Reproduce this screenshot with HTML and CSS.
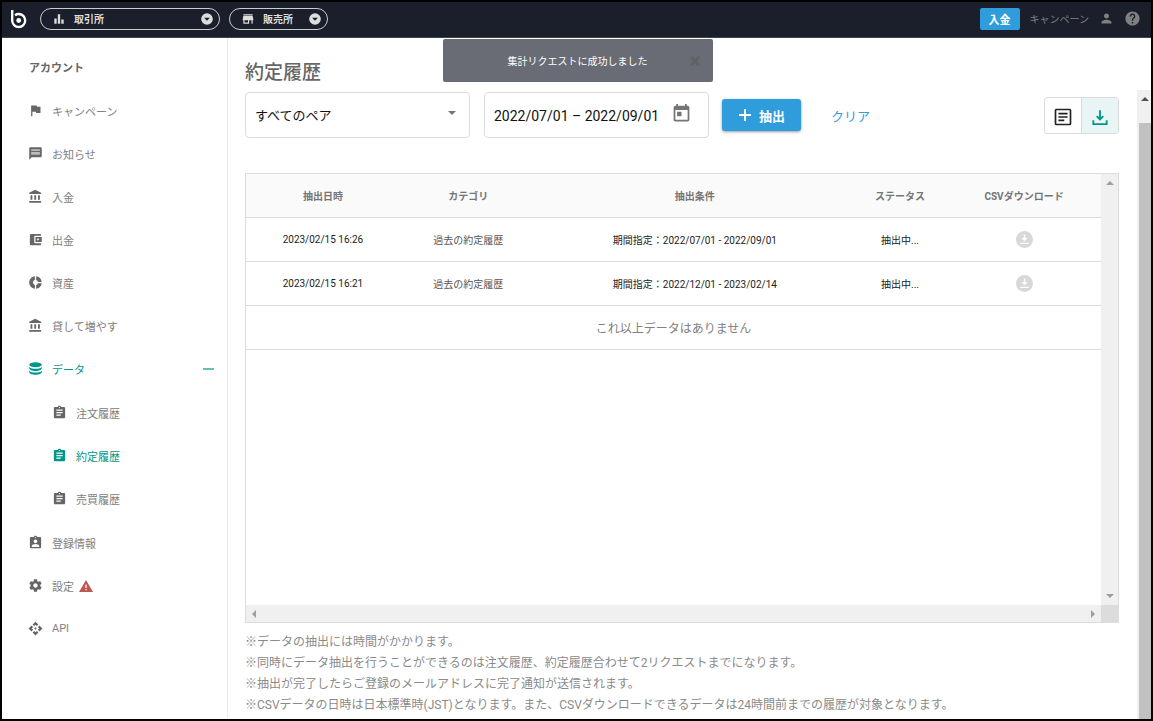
FILE: index.html
```html
<!DOCTYPE html>
<html lang="ja">
<head>
    <meta charset="UTF-8">
    <meta name="viewport" content="width=device-width, initial-scale=1.0">
    <title>約定履歴</title>
    <link rel="stylesheet" href="styles.css">
</head>
<body>
    <!-- Shared icons -->
    <svg class="sprite" aria-hidden="true">
        <symbol id="bank" viewBox="0 0 24 24"><path d="M4 10v7h3v-7H4zm6 0v7h3v-7h-3zM2 22h19v-3H2v3zm14-12v7h3v-7h-3zm-4.500-9L2 6v2h19V6l-9.500-5z"/></symbol>
        <symbol id="clip" viewBox="0 0 24 24"><path d="M19 3h-4.180C14.400 1.840 13.300 1 12 1s-2.400.840-2.820 2H5c-1.100 0-2 .9-2 2v14c0 1.100.9 2 2 2h14c1.100 0 2-.9 2-2V5c0-1.100-.9-2-2-2zm-7 0c.55 0 1 .45 1 1s-.45 1-1 1-1-.45-1-1 .45-1 1-1zm2 14H7v-2h7v2zm3-4H7v-2h10v2zm0-4H7V7h10v2z"/></symbol>
        <symbol id="pulldown" viewBox="0 0 24 24"><path fill-rule="evenodd" d="M12 2a10 10 0 1 0 0 20 10 10 0 0 0 0-20zM7 10h10l-5 5z"/></symbol>
        <symbol id="dl" viewBox="0 0 24 24"><circle cx="12" cy="12" r="12"/><path fill="#fff" d="M11 5h2v5h3.500L12 14.500 7.500 10H11zM6 16.500h12v2H6z"/></symbol>
    </svg>

    <div class="app">
        <header class="header">
            <a href="#" class="logo" aria-label="ホーム">
                <svg viewBox="0 0 18 20" fill="none" stroke="#fff" stroke-width="2.400"><path d="M2.200 1v10.500a6.500 6.500 0 1 0 6.500-6.500c-1.500 0-2.600.4-3.700 1.200"/><circle cx="8.700" cy="11.500" r="2.400" fill="#fff" stroke="none"/></svg>
            </a>
            <button class="market market-wide">
                <svg class="icon" viewBox="0 0 24 24"><path d="M4 11h4v9H4zM10 4h4v16h-4zM16 13h4v7h-4z"/></svg>
                <span>取引所</span>
                <svg class="icon pull"><use href="#pulldown"/></svg>
            </button>
            <button class="market">
                <svg class="icon" viewBox="0 0 24 24"><path d="M20 4H4v2h16V4zm1 10v-2l-1-5H4l-1 5v2h1v6h10v-6h4v6h2v-6h1zm-9 4H6v-4h6v4z"/></svg>
                <span>販売所</span>
                <svg class="icon pull"><use href="#pulldown"/></svg>
            </button>
            <div class="header-right">
                <button class="deposit">入金</button>
                <a href="#" class="header-link">キャンペーン</a>
                <a href="#" aria-label="ユーザー"><svg class="icon" viewBox="0 0 24 24"><path d="M12 12c2.210 0 4-1.790 4-4s-1.790-4-4-4-4 1.790-4 4 1.790 4 4 4zm0 2c-2.670 0-8 1.340-8 4v2h16v-2c0-2.660-5.330-4-8-4z"/></svg></a>
                <a href="#" aria-label="ヘルプ"><svg class="icon icon-help" viewBox="0 0 24 24"><path d="M12 2C6.480 2 2 6.480 2 12s4.480 10 10 10 10-4.480 10-10S17.520 2 12 2zm1 17h-2v-2h2v2zm2.070-7.750l-.9.920C13.450 12.900 13 13.500 13 15h-2v-.5c0-1.100.45-2.100 1.170-2.830l1.240-1.260c.37-.36.590-.86.590-1.410 0-1.100-.9-2-2-2s-2 .9-2 2H8c0-2.210 1.790-4 4-4s4 1.790 4 4c0 .88-.36 1.680-.93 2.250z"/></svg></a>
            </div>
        </header>

        <div class="toast" role="status">
            <span>集計リクエストに成功しました</span>
            <button class="toast-close" aria-label="閉じる"><svg viewBox="0 0 10 10"><path d="M1 1l8 8M9 1L1 9"/></svg></button>
        </div>

        <div class="body">
            <nav class="sidebar">
                <h2>アカウント</h2>
                <ul>
                    <li><a href="#"><svg class="icon" viewBox="0 0 24 24"><path d="M14.400 6L14 4H5v17h2v-7h5.600l.4 2h7V6z"/></svg><span>キャンペーン</span></a></li>
                    <li><a href="#"><svg class="icon" viewBox="0 0 24 24"><path d="M20 2H4c-1.100 0-2 .9-2 2v18l4-4h14c1.100 0 2-.9 2-2V4c0-1.100-.9-2-2-2z"/><path fill="#bbb" d="M5 5h14v3H5zM5 9.500h14V14H5z"/></svg><span>お知らせ</span></a></li>
                    <li><a href="#"><svg class="icon"><use href="#bank"/></svg><span>入金</span></a></li>
                    <li><a href="#"><svg class="icon" viewBox="0 0 24 24"><path d="M21 18v1c0 1.100-.9 2-2 2H5c-1.110 0-2-.9-2-2V5c0-1.100.89-2 2-2h14c1.100 0 2 .9 2 2v1h-9c-1.110 0-2 .9-2 2v8c0 1.100.89 2 2 2h9zm-9-2h10V8H12v8zm4-2.500c-.83 0-1.500-.67-1.500-1.500s.67-1.500 1.500-1.500 1.500.67 1.500 1.500-.67 1.500-1.500 1.500z"/></svg><span>出金</span></a></li>
                    <li><a href="#"><svg class="icon" viewBox="0 0 24 24"><path d="M11 2v6.100C9.300 8.500 8 10.100 8 12s1.300 3.500 3 3.900V22c-5.050-.5-9-4.760-9-10s3.950-9.500 9-10zM13 2v6.100c1.400.4 2.500 1.500 2.900 2.900H22c-.5-4.800-4.200-8.500-9-9zM13 15.900V22c4.800-.5 8.500-4.200 9-9h-6.100c-.4 1.400-1.500 2.500-2.900 2.900z"/></svg><span>資産</span></a></li>
                    <li><a href="#"><svg class="icon"><use href="#bank"/></svg><span>貸して増やす</span></a></li>
                    <li>
                        <a href="#" class="active">
                            <svg class="icon" viewBox="0 0 24 24"><ellipse cx="12" cy="6" rx="10" ry="4"/><path d="M2 9c2 3 6 3.500 10 3.500S20 12 22 9v2.500c0 2.500-4 4.500-10 4.500S2 14 2 11.500zM2 15c2 3 6 3.500 10 3.500s8-.5 10-3.500v2.500c0 2.500-4 4.500-10 4.500S2 20 2 17.500z"/></svg>
                            <span>データ</span>
                            <i class="collapse"></i>
                        </a>
                        <ul class="submenu">
                            <li><a href="#"><svg class="icon"><use href="#clip"/></svg><span>注文履歴</span></a></li>
                            <li><a href="#" class="active"><svg class="icon"><use href="#clip"/></svg><span>約定履歴</span></a></li>
                            <li><a href="#"><svg class="icon"><use href="#clip"/></svg><span>売買履歴</span></a></li>
                        </ul>
                    </li>
                    <li><a href="#"><svg class="icon" viewBox="0 0 24 24"><path d="M19 3h-4.180C14.400 1.840 13.300 1 12 1s-2.400.840-2.820 2H5c-1.100 0-2 .9-2 2v14c0 1.100.9 2 2 2h14c1.100 0 2-.9 2-2V5c0-1.100-.9-2-2-2zm-7 0c.55 0 1 .45 1 1s-.45 1-1 1-1-.45-1-1 .45-1 1-1zm0 4c1.660 0 3 1.340 3 3s-1.340 3-3 3-3-1.340-3-3 1.340-3 3-3zm6 12H6v-1.400c0-2 4-3.100 6-3.100s6 1.100 6 3.100V19z"/></svg><span>登録情報</span></a></li>
                    <li><a href="#"><svg class="icon" viewBox="0 0 24 24"><path d="M19.430 12.980c.04-.32.070-.64.070-.98s-.03-.66-.07-.98l2.110-1.650c.19-.15.24-.42.12-.64l-2-3.460c-.12-.22-.39-.3-.61-.22l-2.490 1c-.52-.4-1.080-.73-1.690-.98l-.38-2.650C14.460 2.180 14.250 2 14 2h-4c-.25 0-.46.18-.49.42l-.38 2.650c-.61.25-1.170.59-1.690.98l-2.490-1c-.23-.09-.49 0-.61.22l-2 3.460c-.13.22-.07.49.12.64l2.110 1.650c-.04.32-.07.65-.07.98s.03.66.07.98l-2.110 1.650c-.19.15-.24.42-.12.64l2 3.460c.12.22.39.3.61.22l2.490-1c.52.4 1.080.73 1.690.98l.38 2.650c.03.24.24.42.49.42h4c.25 0 .46-.18.49-.42l.38-2.650c.61-.25 1.170-.59 1.690-.98l2.490 1c.23.09.49 0 .61-.22l2-3.460c.12-.22.070-.49-.12-.64l-2.110-1.650zM12 15.500c-1.930 0-3.500-1.570-3.500-3.500s1.570-3.500 3.500-3.500 3.500 1.570 3.500 3.500-1.570 3.500-3.500 3.500z"/></svg><span>設定</span><svg class="warning" viewBox="0 0 14 12"><path d="M7 0l7 12H0z"/><path fill="#fff" d="M6.400 4.500h1.200v3.500H6.400zM6.400 9h1.200v1.300H6.400z"/></svg></a></li>
                    <li><a href="#"><svg class="icon" viewBox="0 0 24 24"><path d="M14 12l-2 2-2-2 2-2 2 2zm-2-6l2.120 2.120 2.500-2.500L12 1 7.380 5.620l2.500 2.500L12 6zm-6 6l2.120-2.120-2.500-2.500L1 12l4.620 4.620 2.500-2.500L6 12zm12 0l-2.120 2.120 2.500 2.500L23 12l-4.620-4.620-2.500 2.500L18 12zm-6 6l-2.120-2.120-2.500 2.500L12 23l4.620-4.620-2.500-2.500L12 18z"/></svg><span>API</span></a></li>
                </ul>
            </nav>

            <main class="main">
                <h1>約定履歴</h1>
                <div class="scroller">
                    <div class="content">
                        <form class="filters">
                            <div class="field">
                                <select aria-label="ペア">
                                    <option>すべてのペア</option>
                                </select>
                                <svg class="caret" viewBox="0 0 8 4"><path d="M0 0h8L4 4z"/></svg>
                            </div>
                            <div class="field">
                                <input type="text" value="2022/07/01 – 2022/09/01" aria-label="期間">
                                <svg class="calendar" viewBox="0 0 24 24"><path d="M19 3h-1V1h-2v2H8V1H6v2H5c-1.110 0-1.990.9-1.990 2L3 19c0 1.100.89 2 2 2h14c1.100 0 2-.9 2-2V5c0-1.100-.9-2-2-2zm0 16H5V8h14v11zM7 10h5v5H7z"/></svg>
                            </div>
                            <button type="button" class="extract">
                                <svg viewBox="0 0 14 14"><path d="M7 1v12M1 7h12"/></svg>抽出
                            </button>
                            <button type="reset" class="clear">クリア</button>
                            <div class="toggle">
                                <button type="button" aria-label="一覧"><svg viewBox="0 0 24 24" fill="none" stroke="#222" stroke-width="2"><rect x="3" y="3" width="18" height="18" rx="1"/><path d="M6.500 8h11M6.500 12h11M6.500 16h7"/></svg></button>
                                <button type="button" class="selected" aria-label="ダウンロード"><svg viewBox="0 0 24 24" fill="none" stroke="#00968a" stroke-width="2.200"><path d="M12 4v11M8 11l4 4 4-4M4 16v4.500h16V16"/></svg></button>
                            </div>
                        </form>

                        <div class="table-box">
                            <div class="table-area">
                                <table>
                                    <colgroup>
                                        <col class="col-date"><col class="col-category"><col class="col-condition"><col class="col-status"><col class="col-csv">
                                    </colgroup>
                                    <thead>
                                        <tr>
                                            <th>抽出日時</th>
                                            <th>カテゴリ</th>
                                            <th>抽出条件</th>
                                            <th>ステータス</th>
                                            <th>CSVダウンロード</th>
                                        </tr>
                                    </thead>
                                    <tbody>
                                        <tr>
                                            <td>2023/02/15 16:26</td>
                                            <td class="category">過去の約定履歴</td>
                                            <td>期間指定：2022/07/01 - 2022/09/01</td>
                                            <td>抽出中...</td>
                                            <td><svg class="download"><use href="#dl"/></svg></td>
                                        </tr>
                                        <tr>
                                            <td>2023/02/15 16:21</td>
                                            <td class="category">過去の約定履歴</td>
                                            <td>期間指定：2022/12/01 - 2023/02/14</td>
                                            <td>抽出中...</td>
                                            <td><svg class="download"><use href="#dl"/></svg></td>
                                        </tr>
                                        <tr>
                                            <td colspan="5" class="no-more">これ以上データはありません</td>
                                        </tr>
                                    </tbody>
                                </table>
                            </div>
                            <div class="bar bar-v"><i class="arrow up"></i><i class="arrow down"></i></div>
                            <div class="bar bar-h"><i class="arrow left"></i><i class="arrow right"></i></div>
                            <div class="corner"></div>
                        </div>

                        <div class="notes">
                            <p>※データの抽出には時間がかかります。</p>
                            <p>※同時にデータ抽出を行うことができるのは注文履歴、約定履歴合わせて2リクエストまでになります。</p>
                            <p>※抽出が完了したらご登録のメールアドレスに完了通知が送信されます。</p>
                            <p>※CSVデータの日時は日本標準時(JST)となります。また、CSVダウンロードできるデータは24時間前までの履歴が対象となります。</p>
                        </div>
                    </div>
                    <div class="page-bar"><i class="arrow up"></i><div class="thumb"></div></div>
                </div>
            </main>
        </div>
    </div>
</body>
</html>
```

FILE: styles.css
```css
:root {
    --navy: #1a1f2b;
    --blue: #2f9cdb;
    --green: #00968a;
    --line: #dcdcdc;
    --text: #666;
}

* {
    box-sizing: border-box;
    margin: 0;
    padding: 0;
}

body {
    font-family: Roboto, 'Noto Sans CJK JP', sans-serif;
    font-size: 11px;
    color: var(--text);
    background-color: #fff;
}

button,
input,
select {
    font-family: inherit;
    border: none;
    background: none;
}

button {
    cursor: pointer;
}

a {
    color: inherit;
    text-decoration: none;
}

ul {
    list-style: none;
}

svg {
    display: block;
    fill: currentColor;
}

.sprite {
    display: none;
}

.icon {
    width: 14px;
    height: 14px;
    flex: none;
}

.app {
    position: relative;
    display: flex;
    flex-direction: column;
    height: 100vh;
    min-height: 600px;
    border: 2px solid #000;
}

/* Header */
.header {
    display: flex;
    align-items: center;
    height: 36px;
    padding: 0 10px 2px 8px;
    background-color: var(--navy);
    border-bottom: 1px solid #40434c;
}

.logo svg {
    width: 18px;
    height: 20px;
    fill: none;
}

.market {
    display: flex;
    align-items: center;
    width: 99px;
    height: 22px;
    margin-left: 9px;
    padding: 0 5px 0 11px;
    border: 1px solid #ccc;
    border-radius: 11px;
    color: #ddd;
    font-size: 10px;
    font-weight: 700;
}

.market-wide {
    width: 180px;
    margin-left: 12px;
}

.market span {
    margin-left: 8px;
}

.market .pull {
    margin-left: auto;
}

.header-right {
    display: flex;
    align-items: center;
    gap: 10px;
    margin-left: auto;
    color: #808080;
}

.header-right .icon {
    width: 15px;
    height: 15px;
}

.header-right .icon-help {
    width: 17px;
    height: 17px;
}

.deposit {
    width: 40px;
    height: 22px;
    border-radius: 2px;
    background-color: var(--blue);
    color: #fff;
    font-size: 11px;
    font-weight: 700;
}

.header-link {
    font-size: 10px;
}

/* Toast */
.toast {
    position: absolute;
    top: 37px;
    left: calc(50% - 134px);
    z-index: 1;
    display: flex;
    align-items: center;
    justify-content: center;
    width: 270px;
    height: 43px;
    border-radius: 2px;
    background-color: #696c74;
    color: #fff;
    font-size: 10px;
}

.toast-close {
    position: absolute;
    right: 13px;
}

.toast-close svg {
    width: 10px;
    height: 10px;
    stroke: #606165;
    stroke-width: 3;
}

.body {
    display: flex;
    flex: 1;
    min-height: 0;
}

/* Sidebar */
.sidebar {
    flex: none;
    width: 226px;
    border-right: 1px solid #eaeaea;
    overflow: hidden;
}

.sidebar h2 {
    padding: 21px 27px 10px;
    font-size: 11px;
    font-weight: 700;
    line-height: 20px;
}

.sidebar a {
    display: flex;
    align-items: center;
    gap: 9px;
    height: 43px;
    padding: 0 13px 0 26px;
}

.sidebar .icon {
    width: 15px;
    height: 15px;
}

.sidebar a span {
    color: #808080;
}

.sidebar .submenu {
    padding: 1px 0;
}

.sidebar .submenu a {
    padding-left: 50px;
}

.sidebar .active,
.sidebar .active span {
    color: var(--green);
}

.collapse {
    width: 11px;
    height: 2px;
    margin-left: auto;
    background-color: #66c0b8;
}

.warning {
    width: 14px;
    height: 12px;
    margin-left: -4px;
    color: #c0564f;
}

/* Main */
.main {
    display: flex;
    flex: 1;
    flex-direction: column;
    min-width: 0;
}

h1 {
    padding: 21px 17px 3px;
    font-size: 19px;
    font-weight: 500;
    line-height: 28px;
}

.scroller {
    display: flex;
    flex: 1;
    min-height: 0;
}

.content {
    display: flex;
    flex: 1;
    flex-direction: column;
    min-width: 0;
    padding: 2px 18px 3px 17px;
}

.filters {
    display: flex;
    align-items: center;
    margin-bottom: 35px;
}

.field {
    position: relative;
    width: 225px;
    margin-right: 14px;
}

.field select,
.field input {
    display: block;
    width: 100%;
    height: 46px;
    padding: 1px 9px 0;
    border: 1px solid var(--line);
    border-radius: 4px;
    color: #111;
    font-size: 14px;
}

.field select {
    appearance: none;
    font-size: 13px;
}

.caret {
    position: absolute;
    top: 19px;
    right: 14px;
    width: 8px;
    height: 4px;
    color: #757575;
    pointer-events: none;
}

.calendar {
    position: absolute;
    top: 11px;
    right: 17px;
    width: 21px;
    height: 21px;
    color: #757575;
}

.extract {
    display: flex;
    align-items: center;
    justify-content: center;
    gap: 7px;
    width: 79px;
    height: 32px;
    margin-left: -1px;
    border-radius: 3px;
    background-color: var(--blue);
    box-shadow: 0 1px 3px rgba(0, 0, 0, 0.4);
    color: #fff;
    font-size: 13px;
    font-weight: 700;
}

.extract svg {
    width: 14px;
    height: 14px;
    stroke: #fff;
    stroke-width: 2;
}

.clear {
    margin-left: 30px;
    color: var(--blue);
    font-size: 13px;
}

.toggle {
    display: flex;
    margin-left: auto;
    border: 1px solid var(--line);
    border-radius: 3px;
}

.toggle button {
    display: flex;
    align-items: center;
    justify-content: center;
    width: 36px;
    height: 35px;
    padding-top: 3px;
}

.toggle .selected {
    width: 37px;
    border-left: 1px solid var(--line);
    background-color: #e9f5f5;
}

.toggle svg {
    width: 20px;
    height: 20px;
    fill: none;
}

/* Table */
.table-box {
    display: grid;
    flex: 1;
    grid-template-columns: 1fr 17px;
    grid-template-rows: 1fr 17px;
    min-height: 0;
    border: 1px solid var(--line);
}

.table-area {
    overflow: hidden;
}

table {
    width: 100%;
    table-layout: fixed;
    border-collapse: separate;
    border-spacing: 0;
    font-size: 10px;
    text-align: center;
}

.col-date,
.col-csv {
    width: 18%;
}

.col-category {
    width: 16%;
}

.col-condition {
    width: 37%;
}

.col-status {
    width: 11%;
}

th,
td {
    height: 44px;
    border-bottom: 1px solid var(--line);
    vertical-align: middle;
    white-space: nowrap;
}

th {
    background-color: #fafafa;
    color: #757575;
    font-weight: 700;
}

td {
    color: #222;
}

.category {
    color: #555;
}

.no-more {
    color: #808080;
    font-size: 12px;
}

.download {
    width: 17px;
    height: 17px;
    margin: 0 auto;
    color: #d8d8d8;
}

/* Scroll bars */
.bar,
.page-bar {
    display: flex;
    align-items: center;
    justify-content: space-between;
    background-color: #f0f0f0;
    color: #9e9e9e;
}

.bar-v {
    flex-direction: column;
    padding: 7px 0;
}

.bar-h {
    padding: 0 6px;
}

.corner {
    background-color: var(--line);
}

.arrow {
    border: 4px solid transparent;
}

.up {
    border-top: none;
    border-bottom-color: currentColor;
}

.down {
    border-bottom: none;
    border-top-color: currentColor;
}

.left {
    border-left: none;
    border-right-color: currentColor;
}

.right {
    border-right: none;
    border-left-color: currentColor;
}

.page-bar {
    flex-direction: column;
    width: 14px;
    padding: 7px 0 0 2px;
    color: #505050;
}

.thumb {
    flex: 1;
    width: 100%;
    margin-top: 22px;
    background-color: #c1c1c1;
}

.notes {
    padding-top: 9px;
    color: #8a8a8a;
    font-size: 12px;
    line-height: 21px;
}
```
